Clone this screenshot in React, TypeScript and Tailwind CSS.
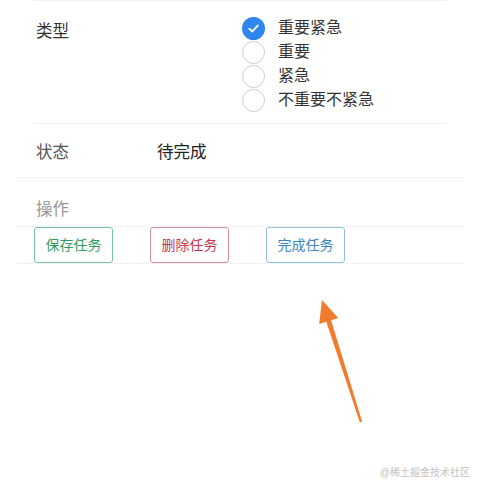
import { useState } from 'react';

const types = ['重要紧急', '重要', '紧急', '不重要不紧急'];

export default function App() {
  const [type, setType] = useState('重要紧急');

  return (
    <div className="relative h-[480px] w-[480px] overflow-hidden bg-white px-[16px] font-['Liberation_Sans','Noto_Sans_CJK_SC',sans-serif] text-[#333]">
      {/* 类型 */}
      <div className="mx-[17px] flex border-y border-[#f2f2f2] pt-[15px] pb-[11px]">
        <div className="mt-[3px] w-[209px] pl-[3px] text-[16.5px] leading-[24px]">类型</div>
        <div className="flex flex-col">
          {types.map((t) => (
            <label key={t} onClick={() => setType(t)} className="flex h-[24px] items-center gap-[13px]">
              {type === t ? (
                <span className="flex h-[23px] w-[23px] items-center justify-center rounded-full bg-[#2f86ec]">
                  <svg width="13" height="13" viewBox="0 0 14 14">
                    <path d="M2.5 7.3 L5.7 10.2 L11.6 3.8" fill="none" stroke="#fff" strokeWidth="2" strokeLinecap="round" strokeLinejoin="round" />
                  </svg>
                </span>
              ) : (
                <span className="h-[23px] w-[23px] rounded-full border border-[#cfcfcf]" />
              )}
              <span className="text-[16px]">{t}</span>
            </label>
          ))}
        </div>
      </div>

      {/* 状态 */}
      <div className="flex h-[54px] items-center border-b border-[#f2f2f2] pl-[20px] pt-[4px] text-[16.5px]">
        <span className="w-[121px] text-[#555]">状态</span>
        <span className="text-[#222]">待完成</span>
      </div>

      {/* 操作 */}
      <div className="flex h-[49px] items-end border-b border-[#f2f2f2] pb-[4px] pl-[20px] text-[16.5px] text-[#999]">
        操作
      </div>
      <div className="flex gap-[37px] border-b border-[#f2f2f2] pl-[18px]">
        <button className="h-[36px] w-[79px] rounded-[3px] border border-[#77c6a0] text-[14px] text-[#2f9d62]">保存任务</button>
        <button className="h-[36px] w-[79px] rounded-[3px] border border-[#d38f9b] text-[14px] text-[#c23a52]">删除任务</button>
        <button className="h-[36px] w-[79px] rounded-[3px] border border-[#93c2e0] text-[14px] text-[#3a87c0]">完成任务</button>
      </div>

      {/* annotation arrow */}
      <svg className="absolute left-0 top-0" width="480" height="480" viewBox="0 0 480 480">
        <polygon
          points="322,300 338.2,318 331.1,320.2 362.1,421.6 359.9,422.4 326.3,321.8 319.2,324"
          fill="#f37b2c"
        />
      </svg>

      <div className="absolute right-[10px] top-[465px] text-[10px] text-[#c4c4c4]">@稀土掘金技术社区</div>
    </div>
  );
}
